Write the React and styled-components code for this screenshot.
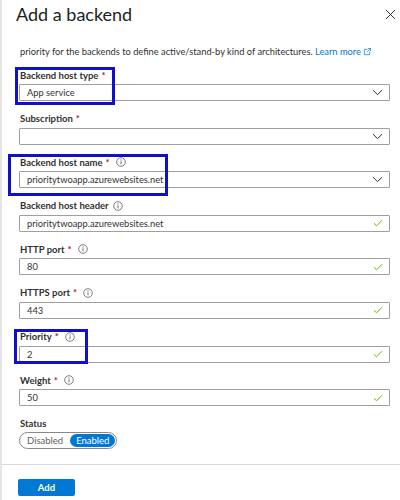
import styled, { createGlobalStyle } from 'styled-components';

const GlobalStyle = createGlobalStyle`
  html, body {
    margin: 0;
    padding: 0;
    background: #ffffff;
  }
  body {
    font-family: Lato, "Open Sans", Arial, sans-serif;
    color: #323130;
  }
`;

const Panel = styled.div`
  width: 400px;
  height: 500px;
  box-sizing: border-box;
  border-left: 2px solid #e6e6e6;
  display: flex;
  flex-direction: column;
  overflow: hidden;
`;

const Header = styled.div`
  display: flex;
  align-items: center;
  justify-content: space-between;
  height: 28px;
  padding: 0 2px 0 14px;
`;

const Title = styled.h1`
  margin: 0;
  font-size: 18px;
  line-height: 22px;
  font-weight: 400;
  color: #201f1e;
`;

const CloseButton = styled.button`
  border: none;
  background: none;
  padding: 0;
  width: 16px;
  height: 16px;
  display: flex;
  align-items: center;
  justify-content: center;
  color: #605e5c;
`;

const Body = styled.div`
  flex: 1;
  padding: 17px 10px 0 17px;
`;

const Description = styled.p`
  margin: 0 0 9px 1px;
  font-size: 9.3px;
  line-height: 14px;
  color: #323130;
  white-space: nowrap;
`;

const LearnMore = styled.a`
  color: #0078d4;
  text-decoration: none;
  svg {
    margin-left: 2px;
    vertical-align: -1px;
  }
`;

const FieldGroup = styled.div`
  position: relative;
  display: flex;
  flex-direction: column;
  align-items: stretch;
  margin-bottom: 10.6px;
`;

const Highlight = styled.div`
  position: absolute;
  left: ${p => p.$box.l}px;
  top: ${p => p.$box.t}px;
  width: ${p => p.$box.w}px;
  height: ${p => p.$box.h}px;
  border: 3px solid #1010cc;
  box-sizing: border-box;
  pointer-events: none;
`;

const Label = styled.div`
  display: flex;
  align-items: center;
  gap: 4px;
  height: 14px;
  margin-bottom: 2px;
  padding-left: 1px;
  font-size: 9.5px;
  font-weight: 700;
  color: #323130;
`;

const Required = styled.span`
  color: #a4262c;
  margin-left: -1px;
  margin-right: 2px;
`;

const Field = styled.div`
  display: flex;
  align-items: center;
  justify-content: space-between;
  height: 17px;
  box-sizing: border-box;
  border: 1px solid #a19f9d;
  border-radius: 1px;
  padding: 0 6px 0 7px;
  font-size: 9.3px;
  color: #323130;
`;

const Toggle = styled.div`
  align-self: flex-start;
  display: flex;
  align-items: center;
  height: 17px;
  margin-top: -1px;
  box-sizing: border-box;
  border: 1px solid #8a8886;
  border-radius: 9px;
  padding: 0 1px 0 7px;
  gap: 7px;
  font-size: 9.5px;
`;

const ToggleOption = styled.span`
  height: 13px;
  line-height: 13px;
  border-radius: 7px;
  color: ${p => (p.$active ? '#ffffff' : '#605e5c')};
  background: ${p => (p.$active ? '#0078d4' : 'transparent')};
  padding: ${p => (p.$active ? '0 6px' : '0')};
`;

const Footer = styled.div`
  display: flex;
  border-top: 1px solid #d8d8d8;
  padding: 14px 16px 4px;
`;

const PrimaryButton = styled.button`
  width: 57px;
  height: 17px;
  border: none;
  border-radius: 2px;
  background: #0078d4;
  color: #ffffff;
  font-family: inherit;
  font-size: 9.5px;
  font-weight: 700;
  padding: 0;
`;

const InfoIcon = () => (
  <svg width="10" height="10" viewBox="0 0 10 10" fill="none">
    <circle cx="5" cy="5" r="4.3" stroke="#605e5c" strokeWidth="0.8" />
    <line x1="5" y1="4.3" x2="5" y2="7.3" stroke="#605e5c" strokeWidth="0.9" />
    <circle cx="5" cy="2.9" r="0.55" fill="#605e5c" />
  </svg>
);

const Chevron = () => (
  <svg width="11" height="7" viewBox="0 0 11 7" fill="none">
    <path d="M1 1.2 L5.5 5.6 L10 1.2" stroke="#323130" strokeWidth="1" />
  </svg>
);

const Check = () => (
  <svg width="10" height="8" viewBox="0 0 10 8" fill="none">
    <path d="M1 4.3 L3.6 6.8 L9 1.2" stroke="#6bb700" strokeWidth="1" />
  </svg>
);

const ExternalIcon = () => (
  <svg width="8" height="8" viewBox="0 0 9 9" fill="none">
    <path d="M5 1.5 H1.5 V7.5 H7.5 V4" stroke="#0078d4" strokeWidth="0.8" />
    <path d="M5.5 0.5 H8.5 V3.5 M8.5 0.5 L4.5 4.5" stroke="#0078d4" strokeWidth="0.8" />
  </svg>
);

const fields = [
  { label: 'Backend host type', required: true, value: 'App service', end: 'chevron', box: { l: -4, t: -1, w: 100, h: 38 } },
  { label: 'Subscription', required: true, value: '', end: 'chevron' },
  { label: 'Backend host name', required: true, info: true, value: 'prioritytwoapp.azurewebsites.net', end: 'chevron', box: { l: -11, t: -1, w: 160, h: 42 } },
  { label: 'Backend host header', info: true, value: 'prioritytwoapp.azurewebsites.net', end: 'check' },
  { label: 'HTTP port', required: true, info: true, value: '80', end: 'check' },
  { label: 'HTTPS port', required: true, info: true, value: '443', end: 'check' },
  { label: 'Priority', required: true, info: true, value: '2', end: 'check', box: { l: -5, t: -1, w: 74, h: 35 } },
  { label: 'Weight', required: true, info: true, value: '50', end: 'check' },
];

const App = () => {
  return (
    <>
      <GlobalStyle />
      <Panel>
        <Header>
          <Title>Add a backend</Title>
          <CloseButton aria-label="Close">
            <svg width="11" height="11" viewBox="0 0 11 11">
              <path d="M1 1 L10 10 M10 1 L1 10" stroke="#323130" strokeWidth="1" />
            </svg>
          </CloseButton>
        </Header>

        <Body>
          <Description>
            priority for the backends to define active/stand-by kind of architectures.{' '}
            <LearnMore href="#">
              Learn more
              <ExternalIcon />
            </LearnMore>
          </Description>

          {fields.map(f => (
            <FieldGroup key={f.label}>
              <Label>
                <span>{f.label}</span>
                {f.required && <Required>*</Required>}
                {f.info && <InfoIcon />}
              </Label>
              <Field>
                <span>{f.value}</span>
                {f.end === 'chevron' ? <Chevron /> : <Check />}
              </Field>
              {f.box && <Highlight $box={f.box} />}
            </FieldGroup>
          ))}

          <FieldGroup>
            <Label>
              <span>Status</span>
            </Label>
            <Toggle>
              <ToggleOption>Disabled</ToggleOption>
              <ToggleOption $active>Enabled</ToggleOption>
            </Toggle>
          </FieldGroup>
        </Body>

        <Footer>
          <PrimaryButton>Add</PrimaryButton>
        </Footer>
      </Panel>
    </>
  );
};

export default App;
